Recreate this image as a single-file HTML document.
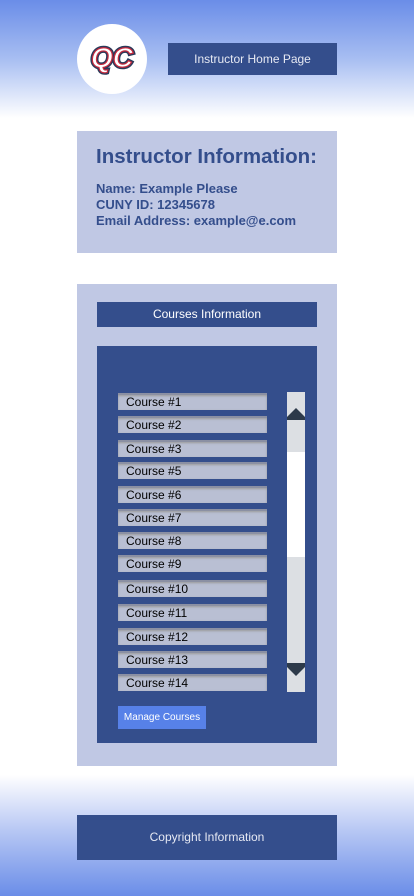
<!DOCTYPE html>
<html><head><meta charset="utf-8"><style>
*{margin:0;padding:0;box-sizing:border-box}
body{width:414px;height:896px;position:relative;overflow:hidden;font-family:"Liberation Sans",sans-serif;
background:linear-gradient(to bottom,#6a8de8 0px,#a9bff2 60px,#fff 118px,#fff 775px,#b8c8f4 830px,#6a8de8 896px)}
.abs{position:absolute}
.dark{background:#344e8c;color:#e6e9f3}
.logo{left:77px;top:24px;width:70px;height:70px;border-radius:50%;background:#fff}
.item{position:absolute;left:118px;width:149px;height:17px;background:#b9bfd3;border-top:2px solid #8b90a3;font-size:12px;color:#000;padding-left:8px;line-height:14px;box-shadow:inset 0 1px 2px #999}
</style></head><body>
<div class="abs logo"><svg width="70" height="70" viewBox="0 0 70 70">
<text x="35" y="43" text-anchor="middle" font-family="Liberation Sans" font-weight="bold" font-style="italic" font-size="28" fill="#fff" stroke="#2a3a5a" stroke-width="4" paint-order="stroke">QC</text>
<text x="35" y="43" text-anchor="middle" font-family="Liberation Sans" font-weight="bold" font-style="italic" font-size="28" fill="none" stroke="#c8283c" stroke-width="1.2">QC</text></svg></div>
<div class="abs dark" style="left:168px;top:43px;width:169px;height:32px;font-size:12px;text-align:center;line-height:32px">Instructor Home Page</div>
<div class="abs" style="left:77px;top:131px;width:260px;height:122px;background:#c0c8e4;color:#344e8c;padding:14px 0 0 19px">
<div style="font-size:20.5px;font-weight:bold;line-height:24px">Instructor Information:</div>
<div style="font-size:13px;font-weight:bold;line-height:16px;margin-top:12px">Name: Example Please<br>CUNY ID: 12345678<br>Email Address: example@e.com</div></div>
<div class="abs" style="left:77px;top:284px;width:260px;height:482px;background:#c0c8e4"></div>
<div class="abs dark" style="left:97px;top:302px;width:220px;height:25px;font-size:12px;text-align:center;line-height:25px;color:#fff">Courses Information</div>
<div class="abs" style="left:97px;top:346px;width:220px;height:397px;background:#344e8c"></div>
<div class="item" style="top:393px">Course #1</div>
<div class="item" style="top:416px">Course #2</div>
<div class="item" style="top:440px">Course #3</div>
<div class="item" style="top:462px">Course #5</div>
<div class="item" style="top:486px">Course #6</div>
<div class="item" style="top:509px">Course #7</div>
<div class="item" style="top:532px">Course #8</div>
<div class="item" style="top:555px">Course #9</div>
<div class="item" style="top:580px">Course #10</div>
<div class="item" style="top:604px">Course #11</div>
<div class="item" style="top:628px">Course #12</div>
<div class="item" style="top:651px">Course #13</div>
<div class="item" style="top:674px">Course #14</div>
<div class="abs" style="left:287px;top:392px;width:18px;height:300px;background:#dcdfe3"></div>
<div class="abs" style="left:287px;top:452px;width:18px;height:105px;background:#fff"></div>
<div class="abs" style="left:287px;top:408px;width:0;height:0;border-left:9px solid transparent;border-right:9px solid transparent;border-bottom:9px solid #2d3a4a"></div>
<div class="abs" style="left:287px;top:417px;width:18px;height:3px;background:#2d3a4a"></div>
<div class="abs" style="left:287px;top:663px;width:18px;height:4px;background:#2d3a4a"></div>
<div class="abs" style="left:287px;top:667px;width:0;height:0;border-left:9px solid transparent;border-right:9px solid transparent;border-top:9px solid #2d3a4a"></div>
<div class="abs" style="left:118px;top:706px;width:88px;height:23px;background:#5781e8;color:#fff;font-size:10px;text-align:center;line-height:23px">Manage Courses</div>
<div class="abs dark" style="left:77px;top:815px;width:260px;height:45px;font-size:12px;text-align:center;line-height:45px">Copyright Information</div>
</body></html>
